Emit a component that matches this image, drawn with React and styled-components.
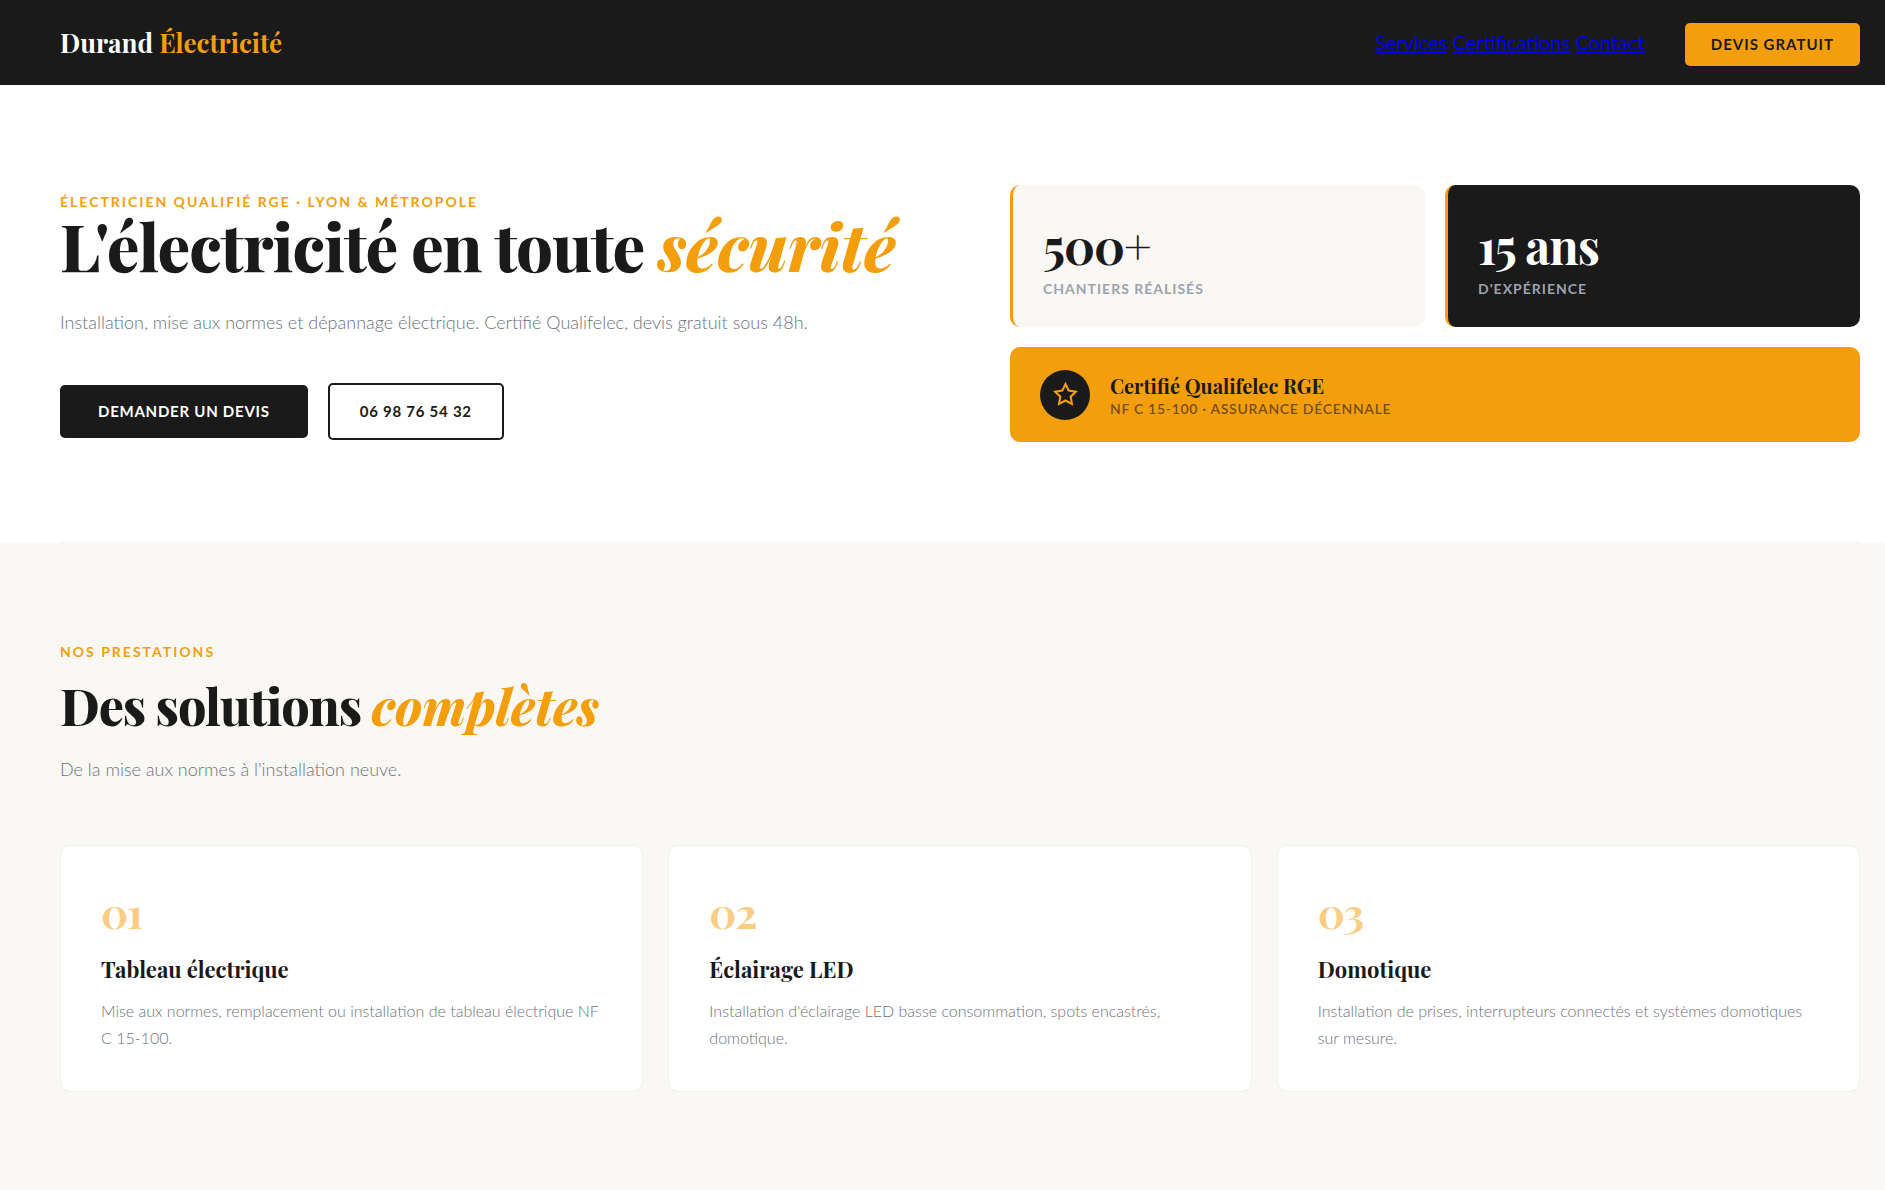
import React from 'react';
import styled, { createGlobalStyle } from 'styled-components';

const stats = [
  { value: '500+', label: 'Chantiers réalisés' },
  { value: '15 ans', label: "D'expérience", dark: true },
];

const services = [
  {
    number: '01',
    title: 'Tableau électrique',
    text: 'Mise aux normes, remplacement ou installation de tableau électrique NF C 15-100.',
  },
  {
    number: '02',
    title: 'Éclairage LED',
    text: "Installation d'éclairage LED basse consommation, spots encastrés, domotique.",
  },
  {
    number: '03',
    title: 'Domotique',
    text: 'Installation de prises, interrupteurs connectés et systèmes domotiques sur mesure.',
  },
];

const App = () => {
  return (
    <>
      <GlobalStyle />
      <Header>
        <Logo>
          Durand <span>Électricité</span>
        </Logo>
        <Nav>
          <div>
            <a href='#services'>Services</a> <a href='#certifications'>Certifications</a>{' '}
            <a href='#contact'>Contact</a>
          </div>
          <NavButton type='button'>Devis gratuit</NavButton>
        </Nav>
      </Header>
      <main>
        <Hero>
          <HeroGrid>
            <HeroCopy>
              <Eyebrow>Électricien qualifié RGE · Lyon & Métropole</Eyebrow>
              <HeroTitle>
                L'électricité en toute <em>sécurité</em>
              </HeroTitle>
              <Lead>
                Installation, mise aux normes et dépannage électrique. Certifié
                Qualifelec, devis gratuit sous 48h.
              </Lead>
              <Actions>
                <PrimaryButton type='button'>Demander un devis</PrimaryButton>
                <OutlineButton type='button'>06 98 76 54 32</OutlineButton>
              </Actions>
            </HeroCopy>
            <HeroCards id='certifications'>
              {stats.map(({ value, label, dark }) => (
                <StatCard key={label} $dark={dark}>
                  <StatValue>{value}</StatValue>
                  <StatLabel>{label}</StatLabel>
                </StatCard>
              ))}
              <CertCard>
                <CertIcon>
                  <svg viewBox='0 0 24 24' aria-hidden='true'>
                    <polygon points='12 2 15.09 8.26 22 9.27 17 14.14 18.18 21.02 12 17.77 5.82 21.02 7 14.14 2 9.27 8.91 8.26 12 2' />
                  </svg>
                </CertIcon>
                <div>
                  <CertTitle>Certifié Qualifelec RGE</CertTitle>
                  <CertText>NF C 15-100 · Assurance décennale</CertText>
                </div>
              </CertCard>
            </HeroCards>
          </HeroGrid>
        </Hero>
        <Services id='services'>
          <Eyebrow>Nos prestations</Eyebrow>
          <SectionTitle>
            Des solutions <em>complètes</em>
          </SectionTitle>
          <SectionText>De la mise aux normes à l'installation neuve.</SectionText>
          <ServiceGrid>
            {services.map(({ number, title, text }) => (
              <ServiceCard key={number}>
                <ServiceNumber>{number}</ServiceNumber>
                <h3>{title}</h3>
                <p>{text}</p>
              </ServiceCard>
            ))}
          </ServiceGrid>
        </Services>
      </main>
    </>
  );
};

const serif = "'Playfair Display', 'Liberation Serif', serif";
const sans = "Lato, 'Liberation Sans', sans-serif";
const amber = '#f59e0b';
const ink = '#1a1a1a';
const cream = '#faf8f5';

const GlobalStyle = createGlobalStyle`
  * {
    margin: 0;
    padding: 0;
    box-sizing: border-box;
  }
  body {
    background: ${cream};
    color: ${ink};
    font-family: ${sans};
    font-size: 20px;
  }
  em {
    font-style: italic;
    letter-spacing: normal;
    color: ${amber};
  }
`;

const Header = styled.header`
  display: flex;
  justify-content: space-between;
  padding: 23px 25px 19px 60px;
  background: ${ink};
`;

const Logo = styled.div`
  font-family: ${serif};
  font-size: 26px;
  line-height: 39px;
  font-weight: 700;
  color: #fff;
  span {
    color: ${amber};
  }
`;

const Nav = styled.nav`
  display: flex;
  align-items: baseline;
  gap: 40px;
  a {
    color: #0000ee;
  }
`;

const Button = styled.button`
  font-family: ${sans};
  font-size: 15px;
  line-height: 19px;
  font-weight: 700;
  letter-spacing: 0.05em;
  text-transform: uppercase;
  border: none;
  border-radius: 5px;
  cursor: pointer;
`;

const NavButton = styled(Button)`
  padding: 12px 26px;
  background: ${amber};
  color: ${ink};
  letter-spacing: 1px;
`;

const PrimaryButton = styled(Button)`
  padding: 17px 38px;
  background: ${ink};
  color: #fff;
`;

const OutlineButton = styled(Button)`
  padding: 17px 30px;
  background: transparent;
  color: ${ink};
  border: 2px solid ${ink};
`;

const Hero = styled.section`
  padding: 0 25px 0 60px;
  background: #fff;
`;

const HeroGrid = styled.div`
  display: grid;
  grid-template-columns: 1fr 1fr;
  align-items: center;
  gap: 100px;
  padding: 100px 0;
  border-bottom: 1px solid #f3f4f6;
`;

const HeroCopy = styled.div`
  padding-top: 6px;
`;

const Eyebrow = styled.p`
  font-size: 14px;
  line-height: 18px;
  font-weight: 700;
  letter-spacing: 2px;
  text-transform: uppercase;
  color: ${amber};
`;

const HeroTitle = styled.h1`
  margin-bottom: 27px;
  font-family: ${serif};
  font-size: 65px;
  line-height: 68px;
  font-weight: 800;
  letter-spacing: -1px;
`;

const Lead = styled.p`
  margin-bottom: 45px;
  font-size: 18px;
  line-height: 32px;
  font-weight: 300;
  color: #6b7280;
`;

const Actions = styled.div`
  display: flex;
  align-items: center;
  gap: 20px;
`;

const HeroCards = styled.div`
  display: grid;
  grid-template-columns: 1fr 1fr;
  gap: 20px;
`;

const StatCard = styled.div`
  padding: 30px;
  border-left: 3px solid ${amber};
  border-radius: 10px;
  background: ${({ $dark }) => ($dark ? ink : cream)};
  color: ${({ $dark }) => ($dark ? '#fff' : ink)};
`;

const StatValue = styled.div`
  font-family: ${serif};
  font-size: 48px;
  line-height: 60px;
  font-weight: 700;
  letter-spacing: -1px;
`;

const StatLabel = styled.div`
  margin-top: 5px;
  font-size: 14px;
  line-height: 17px;
  font-weight: 700;
  letter-spacing: 1px;
  text-transform: uppercase;
  color: #9ca3af;
`;

const CertCard = styled.div`
  grid-column: 1 / -1;
  display: flex;
  align-items: center;
  gap: 20px;
  min-height: 95px;
  padding: 22px 30px;
  border-radius: 10px;
  background: ${amber};
`;

const CertIcon = styled.div`
  display: flex;
  align-items: center;
  justify-content: center;
  width: 50px;
  height: 50px;
  border-radius: 50%;
  background: ${ink};
  svg {
    width: 25px;
    height: 25px;
    fill: none;
    stroke: ${amber};
    stroke-width: 2;
  }
`;

const CertTitle = styled.div`
  font-family: ${serif};
  font-size: 20px;
  line-height: 28px;
  font-weight: 700;
`;

const CertText = styled.div`
  font-size: 14px;
  line-height: 17px;
  font-weight: 600;
  letter-spacing: 0.05em;
  text-transform: uppercase;
  opacity: 0.6;
`;

const Services = styled.section`
  padding: 100px 25px 96px 60px;
`;

const SectionTitle = styled.h2`
  margin: 15px 0 17px;
  font-family: ${serif};
  font-size: 50px;
  line-height: 60px;
  font-weight: 800;
  letter-spacing: -1px;
`;

const SectionText = styled.p`
  margin-bottom: 60px;
  font-size: 18px;
  line-height: 32px;
  font-weight: 300;
  color: #6b7280;
`;

const ServiceGrid = styled.div`
  display: grid;
  grid-template-columns: repeat(3, 1fr);
  gap: 25px;
`;

const ServiceCard = styled.article`
  padding: 40px;
  border: 1px solid #f0f0f0;
  border-radius: 10px;
  background: #fff;
  h3 {
    margin-bottom: 12px;
    font-family: ${serif};
    font-size: 22px;
    line-height: 32px;
    font-weight: 700;
  }
  p {
    font-size: 16px;
    line-height: 27px;
    font-weight: 300;
    color: #6b7280;
  }
`;

const ServiceNumber = styled.div`
  margin-bottom: 15px;
  font-family: ${serif};
  font-size: 42px;
  line-height: 52px;
  font-weight: 700;
  letter-spacing: -1px;
  color: ${amber};
  opacity: 0.5;
`;

export default App;
